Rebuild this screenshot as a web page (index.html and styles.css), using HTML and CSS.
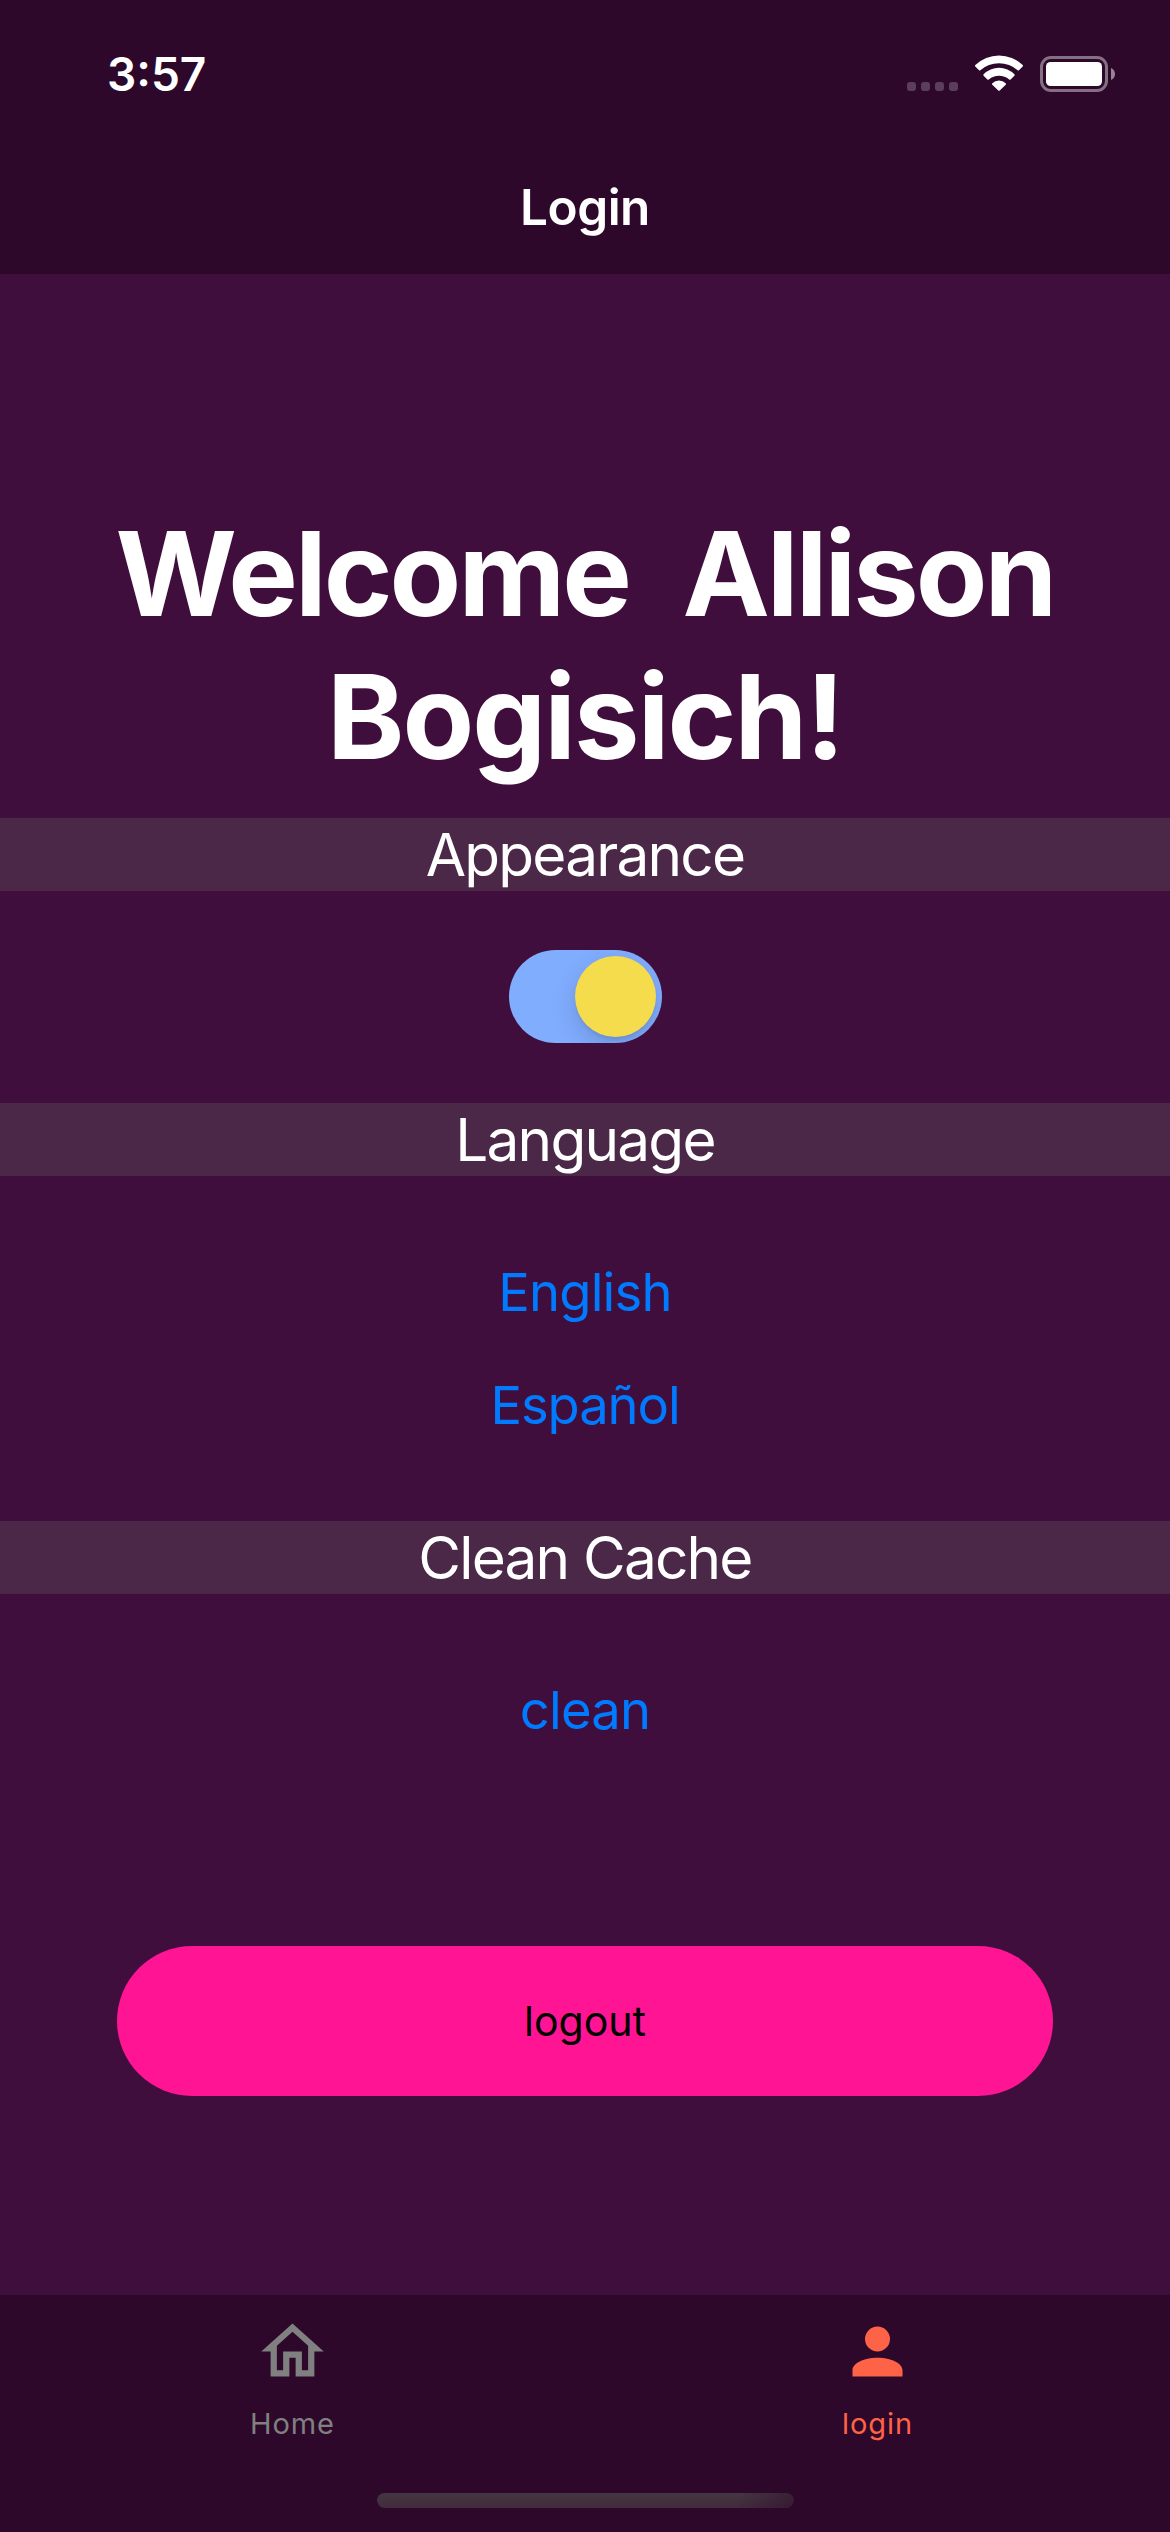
FILE: index.html
```html
<!DOCTYPE html>
<html lang="en">
<head>
<meta charset="utf-8">
<meta name="viewport" content="width=device-width">
<title>Login</title>
<link rel="stylesheet" href="styles.css">
</head>
<body>
<div class="screen">
  <header class="header">
    <div class="status-bar">
      <span class="time">3:57</span>
      <div class="status-icons">
        <svg class="signal" width="51" height="9" viewBox="0 0 51 9" aria-hidden="true">
          <rect width="9" height="9" rx="3"/><rect x="14" width="9" height="9" rx="3"/><rect x="28" width="9" height="9" rx="3"/><rect x="42" width="9" height="9" rx="3"/>
        </svg>
        <svg class="wifi" width="50" height="38" viewBox="974 54 50 38" aria-hidden="true">
          <path d="M975.3 65Q974.6 65.8 975.3 66.5L979 70.3Q979.6 70.9 980.3 70.3A28 28 0 0 1 1017.7 70.3Q1018.4 70.9 1019 70.3L1022.7 66.5Q1023.4 65.8 1022.7 65A34 34 0 0 0 975.3 65Z"/>
          <path d="M983.6 74.2Q982.9 75 983.6 75.7L987.4 79.5Q988 80.1 988.8 79.5A16 16 0 0 1 1009.2 79.5Q1010 80.1 1010.6 79.5L1014.4 75.7Q1015.1 75 1014.4 74.2A21.6 21.6 0 0 0 983.6 74.2Z"/>
          <path d="M992.3 83.2Q991.6 84 992.3 84.7L998.3 90.6Q999 91.3 999.7 90.6L1005.7 84.7Q1006.4 84 1005.7 83.2A9.6 9.6 0 0 0 992.3 83.2Z"/>
        </svg>
        <svg class="battery" width="75" height="36" viewBox="0 0 75 36" aria-hidden="true">
          <rect class="battery-case" x="1.5" y="1.5" width="65" height="33" rx="9.5"/>
          <rect class="battery-level" x="6" y="6" width="56" height="24" rx="4.5"/>
          <path class="battery-cap" d="M71 12c2.5 1 4 3.300 4 6s-1.500 5-4 6z"/>
        </svg>
      </div>
    </div>
    <div class="nav-title">Login</div>
  </header>

  <main class="content">
    <h1 class="welcome"><span class="first-line">Welcome&nbsp; Allison</span><br>Bogisich!</h1>

    <h2 class="section">Appearance</h2>
    <div class="appearance"><div class="switch" role="switch" aria-checked="true"><span class="knob"></span></div></div>

    <h2 class="section">Language</h2>
    <div class="links languages">
      <a class="link">English</a>
      <a class="link espanol">Español</a>
    </div>

    <h2 class="section">Clean Cache</h2>
    <div class="links"><a class="link">clean</a></div>

    <button class="logout" type="button">logout</button>
  </main>

  <footer class="footer">
    <nav class="tabs">
      <a class="tab">
        <svg width="75" height="75" viewBox="0 0 24 24" aria-hidden="true"><path d="M12 5.690l5 4.500V18h-2v-6H9v6H7v-7.810l5-4.500M12 3L2 12h3v8h6v-6h2v6h6v-8h3L12 3z"/></svg>
        <span>Home</span>
      </a>
      <a class="tab active">
        <svg width="75" height="75" viewBox="0 0 24 24" aria-hidden="true"><path d="M12 4a4 4 0 0 1 4 4 4 4 0 0 1-4 4 4 4 0 0 1-4-4 4 4 0 0 1 4-4m0 10c4.420 0 8 1.790 8 4v2H4v-2c0-2.210 3.580-4 8-4z"/></svg>
        <span>login</span>
      </a>
    </nav>
    <div class="home-indicator"></div>
  </footer>
</div>
</body>
</html>
```
FILE: styles.css
```css
* { box-sizing: border-box; }

body {
  margin: 0;
  background: #3f0e3c;
  color: #fff;
  font-family: Inter, "Liberation Sans", sans-serif;
}

.screen {
  display: flex;
  flex-direction: column;
  width: 1170px;
  height: 2532px;
  overflow: hidden;
}

/* Header */
.header {
  height: 274px;
  flex: none;
  background: #2d082a;
}

.status-bar {
  display: flex;
  justify-content: space-between;
  height: 141px;
  padding: 54px 55px 0 107px;
}

.time {
  font-size: 46px;
  font-weight: 600;
  line-height: 41px;
}

.status-icons {
  display: flex;
  align-items: flex-start;
}

.signal { margin: 28px 16px 0 0; fill: #fff; opacity: .22; }
.wifi { margin-right: 16px; fill: #fff; }
.battery { margin-top: 2px; }
.battery-case { fill: none; stroke: #fff; stroke-width: 3; opacity: .42; }
.battery-level { fill: #fff; }
.battery-cap { fill: #fff; opacity: .5; }

.nav-title {
  font-size: 49.5px;
  font-weight: 600;
  letter-spacing: -.5px;
  line-height: 132px;
  text-align: center;
}

/* Main */
.content {
  flex: 1;
  display: flex;
  flex-direction: column;
  padding-top: 228px;
}

.welcome {
  margin: 0 0 30px;
  font-size: 117px;
  font-weight: 700;
  letter-spacing: -1.9px;
  line-height: 143px;
  text-align: center;
}

.first-line {
  letter-spacing: -2.95px;
  word-spacing: 2px;
}

.section {
  height: 73px;
  margin: 0;
  background: #4b2847;
  font-size: 58.5px;
  font-weight: 400;
  letter-spacing: -1.8px;
  line-height: 74px;
  text-align: center;
}

.appearance {
  display: flex;
  justify-content: center;
  padding: 59px 0 60px;
}

.switch {
  display: flex;
  justify-content: flex-end;
  width: 153px;
  height: 93px;
  padding: 6px;
  border-radius: 47px;
  background: #81adff;
  overflow: hidden;
}

.knob {
  width: 81px;
  height: 81px;
  border-radius: 50%;
  background: #f4dc4c;
  box-shadow: 0 9px 24px rgba(0, 0, 0, .15), 0 3px 3px rgba(0, 0, 0, .06);
}

.links {
  display: flex;
  flex-direction: column;
  padding: 60px 0;
  text-align: center;
}

.languages { padding-bottom: 59px; }

.link {
  color: #007aff;
  font-size: 52.5px;
  letter-spacing: -.8px;
  line-height: 113px;
}

.espanol { letter-spacing: -1.07px; }

.logout {
  height: 150px;
  margin: 119px 117px 0;
  padding: 0;
  border: 0;
  border-radius: 75px;
  background: #ff1493;
  color: #000;
  font: 400 41px/148px Inter, "Liberation Sans", sans-serif;
}

/* Tab bar */
.footer {
  display: flex;
  flex-direction: column;
  align-items: center;
  justify-content: space-between;
  flex: none;
  height: 237px;
  padding-bottom: 24px;
  background: #2d082a;
}

.tabs {
  display: flex;
  width: 100%;
}

.tab {
  flex: 1;
  display: flex;
  flex-direction: column;
  align-items: center;
  gap: 15px;
  padding-top: 18.5px;
  color: #808080;
  font-size: 29px;
  letter-spacing: .9px;
  line-height: 40px;
}

.tab svg { fill: currentColor; }
.tab.active { color: #ff6347; }

.home-indicator {
  width: 417px;
  height: 15px;
  border-radius: 8px;
  background:
    linear-gradient(100deg, transparent 86%, rgba(45, 8, 42, .5)),
    linear-gradient(#453641, #412c3c);
}
```
